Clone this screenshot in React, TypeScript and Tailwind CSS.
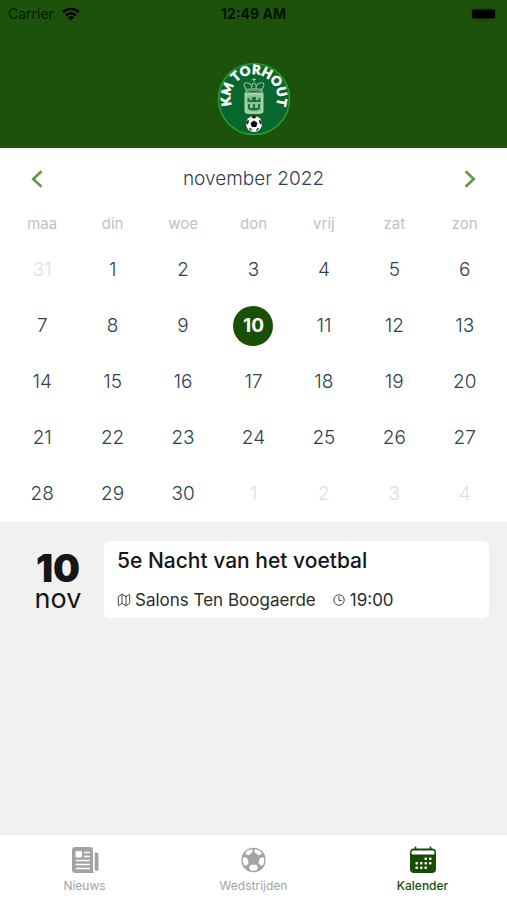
import { IoMapOutline, IoTimeOutline } from "react-icons/io5";
import type { ReactNode } from "react";

const weekdays = ["maa", "din", "woe", "don", "vrij", "zat", "zon"];

type Day = { day: number; outside: boolean };

const days: Day[] = [
  { day: 31, outside: true },
  ...Array.from({ length: 30 }, (_, i) => ({ day: i + 1, outside: false })),
  ...Array.from({ length: 4 }, (_, i) => ({ day: i + 1, outside: true })),
];

const weeks = Array.from({ length: 5 }, (_, i) => days.slice(i * 7, i * 7 + 7));

function WifiIcon() {
  return (
    <svg viewBox="0 0 18 14" className="h-[14px] w-[18px]" aria-hidden="true">
      <g fill="none" stroke="#000" strokeWidth="2.3">
        <path d="M1 5.2a11.5 11.5 0 0 1 16 0" />
        <path d="M4 8.4a7.2 7.2 0 0 1 10 0" />
      </g>
      <path d="M9 13.5 6 10.4a4.3 4.3 0 0 1 6 0Z" />
    </svg>
  );
}

function BatteryIcon() {
  return (
    <svg viewBox="0 0 28 13" className="h-[13px] w-7" aria-hidden="true">
      <rect x="0.5" y="0.5" width="24" height="12" rx="3" fill="none" stroke="#17450a" />
      <rect x="1" y="1.5" width="23" height="9" rx="1.5" />
      <path d="M26 4.5c2 .6 2 3.4 0 4Z" fill="#17450a" />
    </svg>
  );
}

function ClubLogo() {
  return (
    <svg viewBox="0 0 74 74" className="size-[74px] overflow-visible" role="img" aria-label="KM Torhout">
      <circle cx="37" cy="37" r="35.5" fill="#08662f" stroke="#259b2e" strokeWidth="1.6" />
      <path id="logo-arc" d="M17.200 48.500A23.500 23.500 0 1 1 56.800 48.500" fill="none" />
      <text
        fill="#fff"
        stroke="#fff"
        strokeWidth="0.6"
        fontSize="13"
        textAnchor="middle"
        className="font-['Lato','Liberation_Sans',sans-serif] font-black"
      >
        <textPath href="#logo-arc" startOffset="50%">KM TORHOUT</textPath>
      </text>
      <g fill="none" stroke="#8fc092" strokeWidth="1.1">
        <path d="M30 27.500c-4-3-4-8 1-6.500 3 .8 4 3.500 4 6M44 27.500c4-3 4-8-1-6.500-3 .8-4 3.500-4 6" />
        <path d="M35 25c-1-5 5-5 4 0M37 16v4M35 17.500h4" />
        <path d="M29 28c4-1.500 12-1.500 16 0v1.500c-4-1-12-1-16 0Z" />
      </g>
      <path d="M27.500 30.500h19V49c0 2-2 3-4 3h-11c-2 0-4-1-4-3Z" fill="#a9d0a0" />
      <path d="M30 33h14v13.500c0 2-1 3-2.500 3h-9c-1.500 0-2.500-1-2.500-3Z" fill="#8fc090" />
      <path d="M30.500 40v-4h2v2h2.500v-3h4v3h2.500v-2h2v4Z" fill="#167444" />
      <path d="M31 42h2v4h3v-4h2v4h3v-4h2v5c-4 2-8 2-12 0Z" fill="#167444" />
      <circle cx="37" cy="62" r="8" fill="#fff" />
      <path
        d="m37 58.500 3.500 2.600-1.300 4h-4.400l-1.300-4ZM34 54.700l3-1 3 1-3 2ZM29.500 59l2.500-1-.5 3-2 2ZM44.500 59l-2.500-1 .5 3 2 2ZM31.500 66.500l2.500-.2 1 3ZM42.500 66.500l-2.500-.2-1 3Z"
        fill="#081009"
      />
    </svg>
  );
}

function NewsIcon() {
  return (
    <svg viewBox="0 0 28 28" className="size-7" aria-hidden="true">
      <path
        d="M4 1h15a3 3 0 0 1 3 3v20c0 1.500.7 2.600 1.700 3H4.500A3.500 3.500 0 0 1 1 23.500V4a3 3 0 0 1 3-3Z"
        fill="currentColor"
      />
      <path d="M23.700 6.500H25A2.500 2.500 0 0 1 27.500 9v14a1.900 1.900 0 0 1-3.800 0Z" fill="currentColor" />
      <rect x="4.500" y="5" width="6.500" height="6.500" rx="1" fill="#fff" />
      <path
        d="M13.500 6.500h5M13.500 10.500h5M5.300 14.500h13.200M5.300 18.500h13.200M5.300 22.500h13.200"
        stroke="#fff"
        strokeWidth="1.500"
        strokeLinecap="round"
      />
    </svg>
  );
}

function FootballIcon() {
  return (
    <svg viewBox="0 0 28 28" className="size-7" aria-hidden="true">
      <circle cx="13.500" cy="14" r="12.200" fill="currentColor" />
      <g fill="#fff" transform="translate(-0.5 0)">
        <path d="m8.200 4.500 4-1.200.8.700v2.200L9 9.200 6 8.300c-.2-1.500.9-2.900 2.200-3.800Z" />
        <path d="m19.800 4.500-4-1.200-.8.700v2.200l4 3 3-.9c.2-1.500-.9-2.900-2.200-3.800Z" />
        <path d="m3.300 12.500 1.500-1.600 2.900 1.400 1.500 4.600-2 2.600-2.700-.3c-1-2-1.500-4.500-1.200-6.700Z" />
        <path d="m24.700 12.500-1.500-1.600-2.900 1.400-1.500 4.600 2 2.600 2.700-.3c1-2 1.500-4.500 1.200-6.700Z" />
        <path d="m11.200 18.800-1.700 2.500 1.200 2.900c2 .7 4.600.7 6.600 0l1.200-2.900-1.700-2.500Z" />
      </g>
    </svg>
  );
}

function CalendarIcon() {
  return (
    <svg viewBox="0 0 28 28" className="size-7" aria-hidden="true">
      <path d="M6.500 1.500v3M21.500 1.500v3" stroke="currentColor" strokeWidth="1.800" strokeLinecap="round" />
      <rect x="1" y="2.500" width="26" height="24.500" rx="4" fill="currentColor" />
      <rect x="2.500" y="4.500" width="23" height="4" rx="1.500" fill="#fff" />
      <g fill="#fff">
        <rect x="15.500" y="11.500" width="2.500" height="2.500" rx="0.700" />
        <rect x="20" y="11.500" width="2.500" height="2.500" rx="0.700" />
        <rect x="6.500" y="16" width="2.500" height="2.500" rx="0.700" />
        <rect x="11" y="16" width="2.500" height="2.500" rx="0.700" />
        <rect x="15.500" y="16" width="2.500" height="2.500" rx="0.700" />
        <rect x="20" y="16" width="2.500" height="2.500" rx="0.700" />
        <rect x="6.500" y="20.500" width="2.500" height="2.500" rx="0.700" />
        <rect x="11" y="20.500" width="2.500" height="2.500" rx="0.700" />
        <rect x="15.500" y="20.500" width="2.500" height="2.500" rx="0.700" />
      </g>
    </svg>
  );
}

function Chevron({ direction }: { direction: "left" | "right" }) {
  return (
    <svg viewBox="0 0 12 18" className="h-[18px] w-3" aria-hidden="true">
      <path
        d={direction === "left" ? "M10.500 1.200 2.200 9l8.300 7.800" : "M1.500 1.200 9.800 9l-8.300 7.800"}
        fill="none"
        stroke="#65983c"
        strokeWidth="2.600"
      />
    </svg>
  );
}

function Tab({ label, active = false, children }: { label: string; active?: boolean; children: ReactNode }) {
  return (
    <a
      href="#"
      aria-current={active ? "page" : undefined}
      className={`flex flex-1 flex-col items-center gap-1 pt-[11px] text-xs leading-4 ${
        active ? "font-medium text-[#184d08]" : "text-[#a3a3a3]"
      }`}
    >
      {children}
      {label}
    </a>
  );
}

export default function App() {
  return (
    <div className="flex min-h-screen flex-col bg-[#f1f1f1] font-['Inter','Liberation_Sans',sans-serif]">
      <header className="bg-[#1c520a] pb-3">
        <div className="grid h-7 grid-cols-3 items-center px-2 text-sm text-black">
          <div className="flex items-center gap-2 text-black/70">
            Carrier
            <WifiIcon />
          </div>
          <div className="text-center font-bold text-black/80">12:49 AM</div>
          <div className="flex justify-end">
            <BatteryIcon />
          </div>
        </div>
        <div className="flex justify-center pt-[34px]">
          <ClubLogo />
        </div>
      </header>

      <main className="flex-1">
        <section className="bg-white px-[7px]">
          <div className="flex h-[62px] items-center justify-between px-5">
            <button type="button" aria-label="Vorige maand" className="flex w-5 justify-center">
              <Chevron direction="left" />
            </button>
            <h1 className="text-[19px] leading-8 font-light text-[#2d4150]">november 2022</h1>
            <button type="button" aria-label="Volgende maand" className="flex w-5 justify-center">
              <Chevron direction="right" />
            </button>
          </div>
          <table className="w-full table-fixed text-center">
            <thead>
              <tr className="h-8 text-[15px] text-[#bcc3c9]">
                {weekdays.map((name) => (
                  <th key={name} scope="col" className="px-0 pt-0 pb-1 font-normal">
                    {name}
                  </th>
                ))}
              </tr>
            </thead>
            <tbody>
              {weeks.map((week, row) => (
                <tr key={row} className="h-14 text-[19px] leading-8 font-light">
                  {week.map(({ day, outside }) => (
                    <td key={day} className="p-0">
                      <button
                        type="button"
                        className={`size-10 rounded-full ${
                          outside
                            ? "text-[#d9e1e8]"
                            : day === 10
                              ? "bg-[#1a5006] font-bold text-white"
                              : "text-[#2d4150]"
                        }`}
                      >
                        {day}
                      </button>
                    </td>
                  ))}
                </tr>
              ))}
            </tbody>
          </table>
        </section>

        <section className="flex gap-3 py-[19px] pr-[18px] pl-6">
          <div className="flex w-[68px] flex-col items-center pt-[11px] text-[#161616]">
            <span className="text-[38px] leading-8 font-black">10</span>
            <span className="text-[27px] leading-[30px]">nov</span>
          </div>
          <article className="flex-1 rounded-md bg-white px-[13px] pt-1 pb-1.5 text-[#161616]">
            <h2 className="text-[21px] leading-8 font-medium">5e Nacht van het voetbal</h2>
            <div className="flex items-center gap-4 pt-[11px] text-[17px] leading-6 text-[#2b2b2b]">
              <span className="flex items-center gap-1">
                <IoMapOutline className="size-[14px]" />
                Salons Ten Boogaerde
              </span>
              <span className="flex items-center gap-1">
                <IoTimeOutline className="size-[14px]" />
                19:00
              </span>
            </div>
          </article>
        </section>
      </main>

      <nav className="flex h-[66px] border-t border-[#e8e8e8] bg-white">
        <Tab label="Nieuws">
          <NewsIcon />
        </Tab>
        <Tab label="Wedstrijden">
          <FootballIcon />
        </Tab>
        <Tab label="Kalender" active>
          <CalendarIcon />
        </Tab>
      </nav>
    </div>
  );
}
